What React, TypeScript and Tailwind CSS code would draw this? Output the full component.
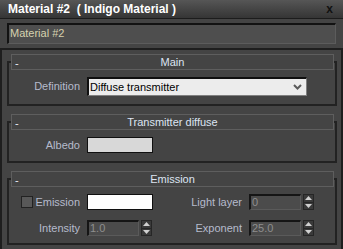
import React from 'react';

const font = { fontFamily: '"Liberation Sans", Arial, sans-serif' };

function Rollout({ title, children }: { title: string; children: React.ReactNode }) {
  return (
    <div className="ml-[5px] mr-[4px] mt-[15px] border-2 border-[#222] first:mt-[11px]">
      <div className="-mt-[9px] ml-[2px] mr-[1px] h-[16px] border border-[#5e5e5e] bg-[#444] flex items-center relative">
        <span className="absolute left-[3px] top-[3px] text-[11px] leading-[11px] text-[#e8ecf4]">-</span>
        <span className="flex-1 text-center text-[11px] leading-[14px] text-[#dde4f2]">{title}</span>
      </div>
      {children}
    </div>
  );
}

function Spinner({ value }: { value: string }) {
  return (
    <div className="flex items-center gap-[2px]">
      <div className="w-[52px] h-[16px] bg-[#4b4b4b] border-t-2 border-l-2 border-[#151515] border-b border-r border-b-[#5a5a5a] border-r-[#5a5a5a] px-[1px] text-[11px] leading-[13px] text-[#8e8e8e]">
        {value}
      </div>
      <div className="w-[11px] h-[16px] bg-[#3a3a3a] border border-[#262626] flex flex-col">
        <div className="flex-1 flex items-center justify-center border-b border-[#262626]">
          <svg width="7" height="4" viewBox="0 0 7 4"><polygon points="0,4 3.5,0 7,4" fill="#d0d0d0" /></svg>
        </div>
        <div className="flex-1 flex items-center justify-center">
          <svg width="7" height="4" viewBox="0 0 7 4"><polygon points="0,0 3.5,4 7,0" fill="#d0d0d0" /></svg>
        </div>
      </div>
    </div>
  );
}

function Label({ children, w }: { children: React.ReactNode; w: string }) {
  return <div className={`${w} text-right text-[11px] leading-[13px] text-[#b6bbcc]`}>{children}</div>;
}

export default function App() {
  return (
    <div className="w-[343px] h-[249px] bg-[#444] overflow-hidden flex flex-col" style={font}>
      <div className="h-[19px] bg-gradient-to-b from-[#565656] to-[#353535] border-b border-[#1c1c1c] flex items-center justify-between pl-[8px] pr-[10px]">
        <span className="text-[12px] font-bold text-white leading-[14px] whitespace-pre">Material #2  ( Indigo Material )</span>
        <span className="text-[12px] font-bold text-[#111] leading-[12px]">x</span>
      </div>
      <div className="h-[29px] pt-[4px] px-[7px] bg-[#444]">
        <div className="h-[21px] bg-[#4e4e4e] border-t-2 border-l-2 border-[#121212] border-b border-r border-b-[#5c5c5c] border-r-[#5c5c5c] pl-[1px] text-[11px] leading-[16px] text-[#d6d2ae]">
          Material #2
        </div>
      </div>
      <div className="flex-1 border-t-2 border-l-2 border-r-2 border-[#1e1e1e] flex flex-col">
        <Rollout title="Main">
          <div className="flex items-center pt-[7px] pb-[8px]">
            <Label w="w-[71px]">Definition</Label>
            <div className="ml-[7px] w-[220px] h-[19px] bg-[#ececec] border-t-2 border-l-2 border-[#101010] border-b border-r border-b-[#808080] border-r-[#808080] flex items-center justify-between pl-[1px] pr-[4px]">
              <span className="text-[11px] text-black leading-[13px]">Diffuse transmitter</span>
              <svg width="9" height="6" viewBox="0 0 9 6"><polyline points="1,1 4.5,4.5 8,1" fill="none" stroke="#5a5a5a" strokeWidth="2" /></svg>
            </div>
          </div>
        </Rollout>
        <Rollout title="Transmitter diffuse">
          <div className="flex items-center pt-[7px] pb-[8px]">
            <Label w="w-[71px]">Albedo</Label>
            <div className="ml-[7px] w-[66px] h-[16px] bg-[#d8d8d8] border border-[#101010]" />
          </div>
        </Rollout>
        <Rollout title="Emission">
          <div className="flex flex-col gap-[10px] pt-[7px] pb-[7px]">
            <div className="flex items-center">
              <div className="w-[71px] pl-[12px] flex items-center justify-between">
                <div className="w-[12px] h-[12px] bg-[#585858] border border-[#222]" />
                <span className="text-[11px] leading-[13px] text-[#b6bbcc]">Emission</span>
              </div>
              <div className="ml-[7px] w-[66px] h-[16px] bg-white border border-[#101010]" />
              <Label w="w-[89px]">Light layer</Label>
              <div className="ml-[7px]">
                <Spinner value="0" />
              </div>
            </div>
            <div className="flex items-center">
              <Label w="w-[71px]">Intensity</Label>
              <div className="ml-[7px] w-[66px]">
                <Spinner value="1.0" />
              </div>
              <Label w="w-[89px]">Exponent</Label>
              <div className="ml-[7px]">
                <Spinner value="25.0" />
              </div>
            </div>
          </div>
        </Rollout>
      </div>
    </div>
  );
}
